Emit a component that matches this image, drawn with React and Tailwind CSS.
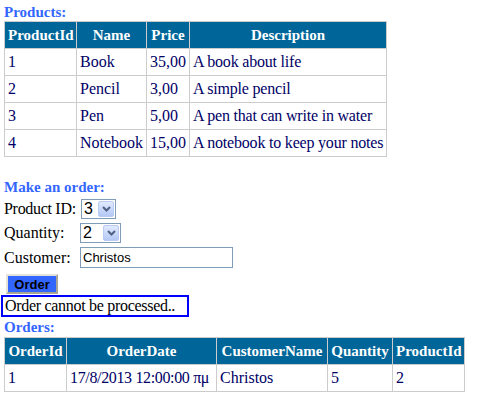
import React from 'react';

const products = [
  { id: 1, name: 'Book', price: '35,00', desc: 'A book about life' },
  { id: 2, name: 'Pencil', price: '3,00', desc: 'A simple pencil' },
  { id: 3, name: 'Pen', price: '5,00', desc: 'A pen that can write in water' },
  { id: 4, name: 'Notebook', price: '15,00', desc: 'A notebook to keep your notes' },
];

const orders = [
  { id: 1, date: '17/8/2013 12:00:00 πμ', customer: 'Christos', quantity: 5, productId: 2 },
];

const thClass =
  'border border-[#cccccc] bg-[#006699] text-white font-bold text-[15px] leading-[20px] px-[3px] py-[3px] text-center whitespace-nowrap overflow-hidden';
const tdClass =
  'border border-[#cccccc] px-[3px] py-[3px] leading-[20px] text-[#000066] text-left whitespace-nowrap overflow-hidden';

const Heading = ({ children, className }) => (
  <div className={`font-bold text-[15px] leading-[18px] text-[#3366ff] ${className}`}>{children}</div>
);

const DropDown = ({ value, width }) => (
  <div className={`flex items-center h-[20px] ${width} border border-[#7f9db9] bg-white`}>
    <span className="flex-1 pl-[2px] font-['Liberation_Sans',Arial,sans-serif] text-[16px] leading-none text-black">
      {value}
    </span>
    <span className="mr-[1px] flex h-[16px] w-[16px] items-center justify-center rounded-[2px] border border-[#b9cbf3] bg-linear-to-b from-[#e1eafe] to-[#b4c8f5]">
      <svg width="9" height="6" viewBox="0 0 9 6">
        <path d="M1 1 L4.5 4.5 L8 1" fill="none" stroke="#4d6185" strokeWidth="2" />
      </svg>
    </span>
  </div>
);

const App = () => {
  return (
    <div className="min-h-screen bg-white pl-[4px] font-['Liberation_Serif','Times_New_Roman',serif] text-[16px] text-black">
      <Heading className="h-[21px] pt-[3px]">Products:</Heading>

      <table className="w-[382px] table-fixed border-collapse">
        <colgroup>
          <col className="w-[72px]" />
          <col className="w-[70px]" />
          <col className="w-[43px]" />
          <col className="w-[197px]" />
        </colgroup>
        <thead>
          <tr>
            <th className={thClass}>ProductId</th>
            <th className={thClass}>Name</th>
            <th className={thClass}>Price</th>
            <th className={thClass}>Description</th>
          </tr>
        </thead>
        <tbody>
          {products.map((p) => (
            <tr key={p.id}>
              <td className={tdClass}>{p.id}</td>
              <td className={tdClass}>{p.name}</td>
              <td className={tdClass}>{p.price}</td>
              <td className={`${tdClass} tracking-[-0.2px]`}>{p.desc}</td>
            </tr>
          ))}
        </tbody>
      </table>

      <Heading className="mt-[20px] pt-[1px]">Make an order:</Heading>

      <div className="mt-[1px] flex h-[24px] items-center leading-[20px]">
        <span className="w-[77px] tracking-[-0.3px]">Product ID:</span>
        <DropDown value="3" width="w-[35px]" />
      </div>
      <div className="flex h-[24px] items-center leading-[20px]">
        <span className="w-[76px]">Quantity:</span>
        <DropDown value="2" width="w-[41px]" />
      </div>
      <div className="flex h-[25px] items-center leading-[20px]">
        <span className="w-[76px]">Customer:</span>
        <div className="flex h-[21px] w-[153px] items-center border border-[#7f9db9] bg-white pl-[2px] font-['Liberation_Sans',Arial,sans-serif] text-[13px]">
          Christos
        </div>
      </div>

      <button className="ml-[2px] mt-[4px] block h-[20px] w-[52px] border-2 border-t-[#e4e1d6] border-l-[#e4e1d6] border-b-[#a8a496] border-r-[#a8a496] bg-[#3366ff] font-['Liberation_Sans',Arial,sans-serif] text-[13px] font-bold leading-none text-black">
        Order
      </button>

      <div className="-ml-[3px] mt-[1px] flex h-[22px] w-[188px] items-center border-2 border-[#0000ff] pl-[2px] leading-[18px] tracking-[-0.3px]">
        Order cannot be processed..
      </div>

      <Heading className="h-[20px] pt-[1px]">Orders:</Heading>

      <table className="w-[460px] table-fixed border-collapse">
        <colgroup>
          <col className="w-[62px]" />
          <col className="w-[150px]" />
          <col className="w-[111px]" />
          <col className="w-[65px]" />
          <col className="w-[72px]" />
        </colgroup>
        <thead>
          <tr>
            <th className={thClass}>OrderId</th>
            <th className={thClass}>OrderDate</th>
            <th className={thClass}>CustomerName</th>
            <th className={thClass}>Quantity</th>
            <th className={thClass}>ProductId</th>
          </tr>
        </thead>
        <tbody>
          {orders.map((o) => (
            <tr key={o.id}>
              <td className={tdClass}>{o.id}</td>
              <td className={`${tdClass} tracking-[-0.35px]`}>{o.date}</td>
              <td className={tdClass}>{o.customer}</td>
              <td className={tdClass}>{o.quantity}</td>
              <td className={tdClass}>{o.productId}</td>
            </tr>
          ))}
        </tbody>
      </table>
    </div>
  );
};

export default App;
